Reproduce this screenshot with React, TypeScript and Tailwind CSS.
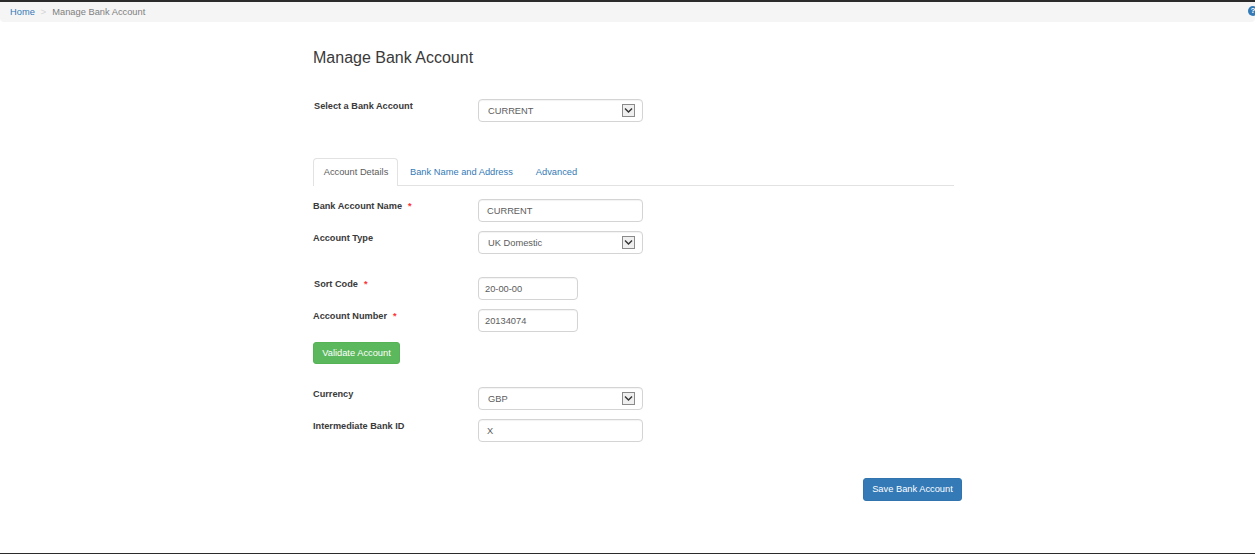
const FONT = "font-['Liberation_Sans',Arial,sans-serif]";

function Field({ children, width = "w-[165px]", pad = "pl-[8px]" }: { children: React.ReactNode; width?: string; pad?: string }) {
  return (
    <div className={`${width} ${pad} flex h-[23px] items-center rounded-[4px] border border-[#d4d4d4] bg-white pt-[2px] text-[9.3px] text-[#5c5c5c] shadow-[inset_0_1px_1px_rgba(0,0,0,0.05)]`}>
      {children}
    </div>
  );
}

function Select({ value }: { value: string }) {
  return (
    <Field pad="pl-[9px]">
      <span className="flex-1">{value}</span>
      <span className="mr-[7px] mb-[2px] flex h-[13px] w-[13px] items-center justify-center border border-[#8a8a8a] bg-[#efefef]">
        <svg width="9" height="7" viewBox="0 0 9 7" fill="none">
          <path d="M1 1.5 L4.5 5 L8 1.5" stroke="#333" strokeWidth="1.4" />
        </svg>
      </span>
    </Field>
  );
}

function Label({ text, required, indent }: { text: string; required?: boolean; indent?: boolean }) {
  return (
    <div className={`w-[165px] text-[9.2px] leading-[14px] font-bold text-[#3a3a3a] ${indent ? "pl-[1px]" : ""}`}>
      {text}
      {required && <span className="ml-[6px] text-[#f33]">*</span>}
    </div>
  );
}

export default function App() {
  return (
    <div className={`${FONT} flex h-[554px] flex-col overflow-hidden bg-white`}>
      <div className="h-[2px] bg-[#2b2b2b]" />

      {/* breadcrumb */}
      <div className="flex h-[20px] items-center justify-between rounded-b-[4px] bg-[#f5f5f5] pl-[10px] text-[9.3px]">
        <div className="flex items-center pt-[1px]">
          <span className="text-[#337ab7]">Home</span>
          <span className="mx-[6px] text-[#d4d4d4]">&gt;</span>
          <span className="text-[#808080]">Manage Bank Account</span>
        </div>
        <span className="mr-[-3px] mb-[3px] flex h-[10px] w-[10px] items-center justify-center rounded-full bg-[#337ab7] text-[8px] leading-none font-bold text-white">?</span>
      </div>

      {/* page content */}
      <div className="ml-[313px] flex w-[649px] flex-1 flex-col">
        <h1 className="mt-[26px] text-[16px] leading-[20px] text-[#3a3a3a]">Manage Bank Account</h1>

        <div className="mt-[31px] flex">
          <Label text="Select a Bank Account" indent />
          <Select value="CURRENT" />
        </div>

        {/* tabs */}
        <div className="mt-[36px] flex h-[28px] w-[641px] border-b border-[#e2e2e2] text-[9.3px]">
          <div className="flex h-[28px] w-[85px] items-center justify-center rounded-t-[4px] border border-b-0 border-[#e2e2e2] bg-white pl-[1px] text-[#5c5c5c]">Account Details</div>
          <div className="ml-[12px] flex h-[28px] items-center pt-[1px] text-[#337ab7]">Bank Name and Address</div>
          <div className="ml-[23px] flex h-[28px] items-center pt-[1px] text-[#337ab7]">Advanced</div>
        </div>

        <div className="mt-[13px] flex">
          <Label text="Bank Account Name" required />
          <Field>CURRENT</Field>
        </div>
        <div className="mt-[9px] flex">
          <Label text="Account Type" />
          <Select value="UK Domestic" />
        </div>
        <div className="mt-[23px] flex">
          <Label text="Sort Code" required indent />
          <Field width="w-[100px]" pad="pl-[6px]">20-00-00</Field>
        </div>
        <div className="mt-[9px] flex">
          <Label text="Account Number" required />
          <Field width="w-[100px]" pad="pl-[6px]">20134074</Field>
        </div>
        <button className="mt-[10px] h-[22px] w-[87px] rounded-[3px] border border-[#55b355] bg-[#5cb85c] pt-[1px] text-[9.3px] text-white">Validate Account</button>
        <div className="mt-[23px] flex">
          <Label text="Currency" />
          <Select value="GBP" />
        </div>
        <div className="mt-[9px] flex">
          <Label text="Intermediate Bank ID" />
          <Field>X</Field>
        </div>
        <button className="mt-[36px] h-[23px] w-[99px] self-end rounded-[3px] border border-[#3174ae] bg-[#337ab7] text-[9.3px] text-white">Save Bank Account</button>
      </div>

      <div className="h-[1px] bg-[#2b2b2b]" />
    </div>
  );
}
